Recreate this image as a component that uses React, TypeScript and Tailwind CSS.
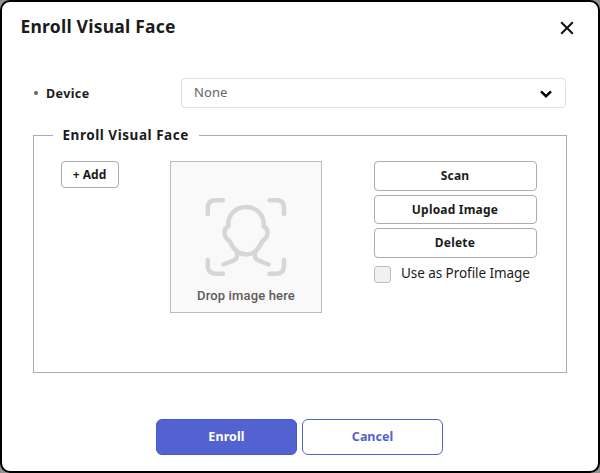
import type { ReactNode } from "react";

function OutlineButton({ children }: { children: ReactNode }) {
  return (
    <button className="flex h-[29.600px] w-[163px] items-center justify-center rounded-[4px] border border-[#acacac] bg-white pt-px pr-px text-[12px] font-bold tracking-[0.2px] text-[#1b1b1b]">
      {children}
    </button>
  );
}

function FaceIcon() {
  return (
    <svg width="82" height="80" viewBox="0 0 82 80" fill="none" stroke="#d6d6d6" strokeWidth="4.5" strokeLinecap="round" strokeLinejoin="round">
      <path d="M2.800 17V11Q2.800 3.300 10.500 3.300H18" />
      <path d="M64.500 3.300H71.500Q79 3.300 79 11V17" />
      <path d="M2.800 63V69Q2.800 76.700 10.500 76.700H18" />
      <path d="M64.500 76.700H71.500Q79 76.700 79 69V63" />
      <path d="M23.300 29.500C22.300 18 30.500 10 41 10S59.700 18 58.700 29.500C63.500 31.500 64.500 39 57.500 44C54 52 48.500 57.500 41 57.500S28 52 24.500 44C17.500 39 18.500 31.500 23.300 29.500Z" />
      <path d="M32 56V58.500Q32 62 28.500 63.500L18.500 67.500" />
      <path d="M50 56V58.500Q50 62 53.500 63.500L63.500 67.500" />
    </svg>
  );
}

export default function App() {
  return (
    <div className="h-[473px] w-[600px] bg-[#929292] font-['Noto_Sans',sans-serif] text-[#1b1b1b]">
      <main className="flex h-full w-full flex-col rounded-[10px] border-2 border-black bg-white">
        <header className="flex h-[50px] items-center justify-between pr-[23.500px] pl-[18.500px]">
          <h1 className="-mt-[2px] text-[17.500px] leading-[50px] font-bold tracking-[0.22px]">Enroll Visual Face</h1>
          <button aria-label="Close" className="mt-px">
            <svg width="16" height="16" viewBox="0 0 16 16" stroke="#111" strokeWidth="2">
              <path d="M2.200 2.200L13.800 13.800M13.800 2.200L2.200 13.800" />
            </svg>
          </button>
        </header>

        <div className="mt-[26px] ml-[31px] flex h-[30px] w-[533px] items-center">
          <span className="mr-[8px] ml-px size-[4px] rounded-full bg-[#666]" />
          <label className="w-[135px] pt-[2px] text-[12.500px] font-bold tracking-[0.4px]">Device</label>
          <button className="flex h-[30px] w-[385px] items-center justify-between rounded-[4px] border border-[#e0e0e0] pr-[13.500px] pb-px pl-[12px] text-[13px] tracking-[0.1px] text-[#666]">
            <span>None</span>
            <svg className="mt-[2px]" width="12" height="8" viewBox="0 0 12 8" fill="none" stroke="#000" strokeWidth="2.400">
              <path d="M1 1.300L6 6.200L11 1.300" />
            </svg>
          </button>
        </div>

        <fieldset className="mt-[17px] ml-[31px] h-[248px] w-[534px] border border-[#acacac] pl-[27px]">
          <legend className="-ml-[8px] h-[20px] w-[146px] pl-[9.500px] text-[13.500px] leading-[20px] font-bold tracking-[0.54px]">Enroll Visual Face</legend>
          <div className="flex items-start pt-[16px]">
            <button className="h-[27px] w-[58px] rounded-[4px] border border-[#acacac] pr-px text-[12px] font-bold">+ Add</button>
            <div className="ml-[51px] flex h-[152px] w-[152px] flex-col items-center border border-[#bdbdbd] bg-[#f9f9f9] pt-[35px]">
              <FaceIcon />
              <span className="mt-[9px] font-['Roboto',sans-serif] text-[13px] leading-[20px] font-medium tracking-[0.15px] whitespace-nowrap text-[#5c5c5c]">Drop image here</span>
            </div>
            <div className="ml-[52px] flex flex-col gap-[4px]">
              <OutlineButton>Scan</OutlineButton>
              <OutlineButton>Upload Image</OutlineButton>
              <OutlineButton>Delete</OutlineButton>
              <label className="flex h-[22px] items-center">
                <span className="mt-[4px] size-[17px] rounded-[3px] border border-[#bdbdbd] bg-[#f1f1f1]" />
                <span className="ml-[10px] text-[13.500px] tracking-[-0.06px] whitespace-nowrap">Use as Profile Image</span>
              </label>
            </div>
          </div>
        </fieldset>

        <footer className="mt-[46px] ml-[154px] flex gap-[5px]">
          <button className="h-[36px] w-[141px] rounded-[6px] border border-[#4858c8] bg-[#5263d1] text-[12.500px] font-bold tracking-[0.1px] text-white">Enroll</button>
          <button className="h-[36px] w-[141px] rounded-[6px] border border-[#5263d1] bg-white text-[12.500px] font-bold text-[#5263d1]">Cancel</button>
        </footer>
      </main>
    </div>
  );
}
